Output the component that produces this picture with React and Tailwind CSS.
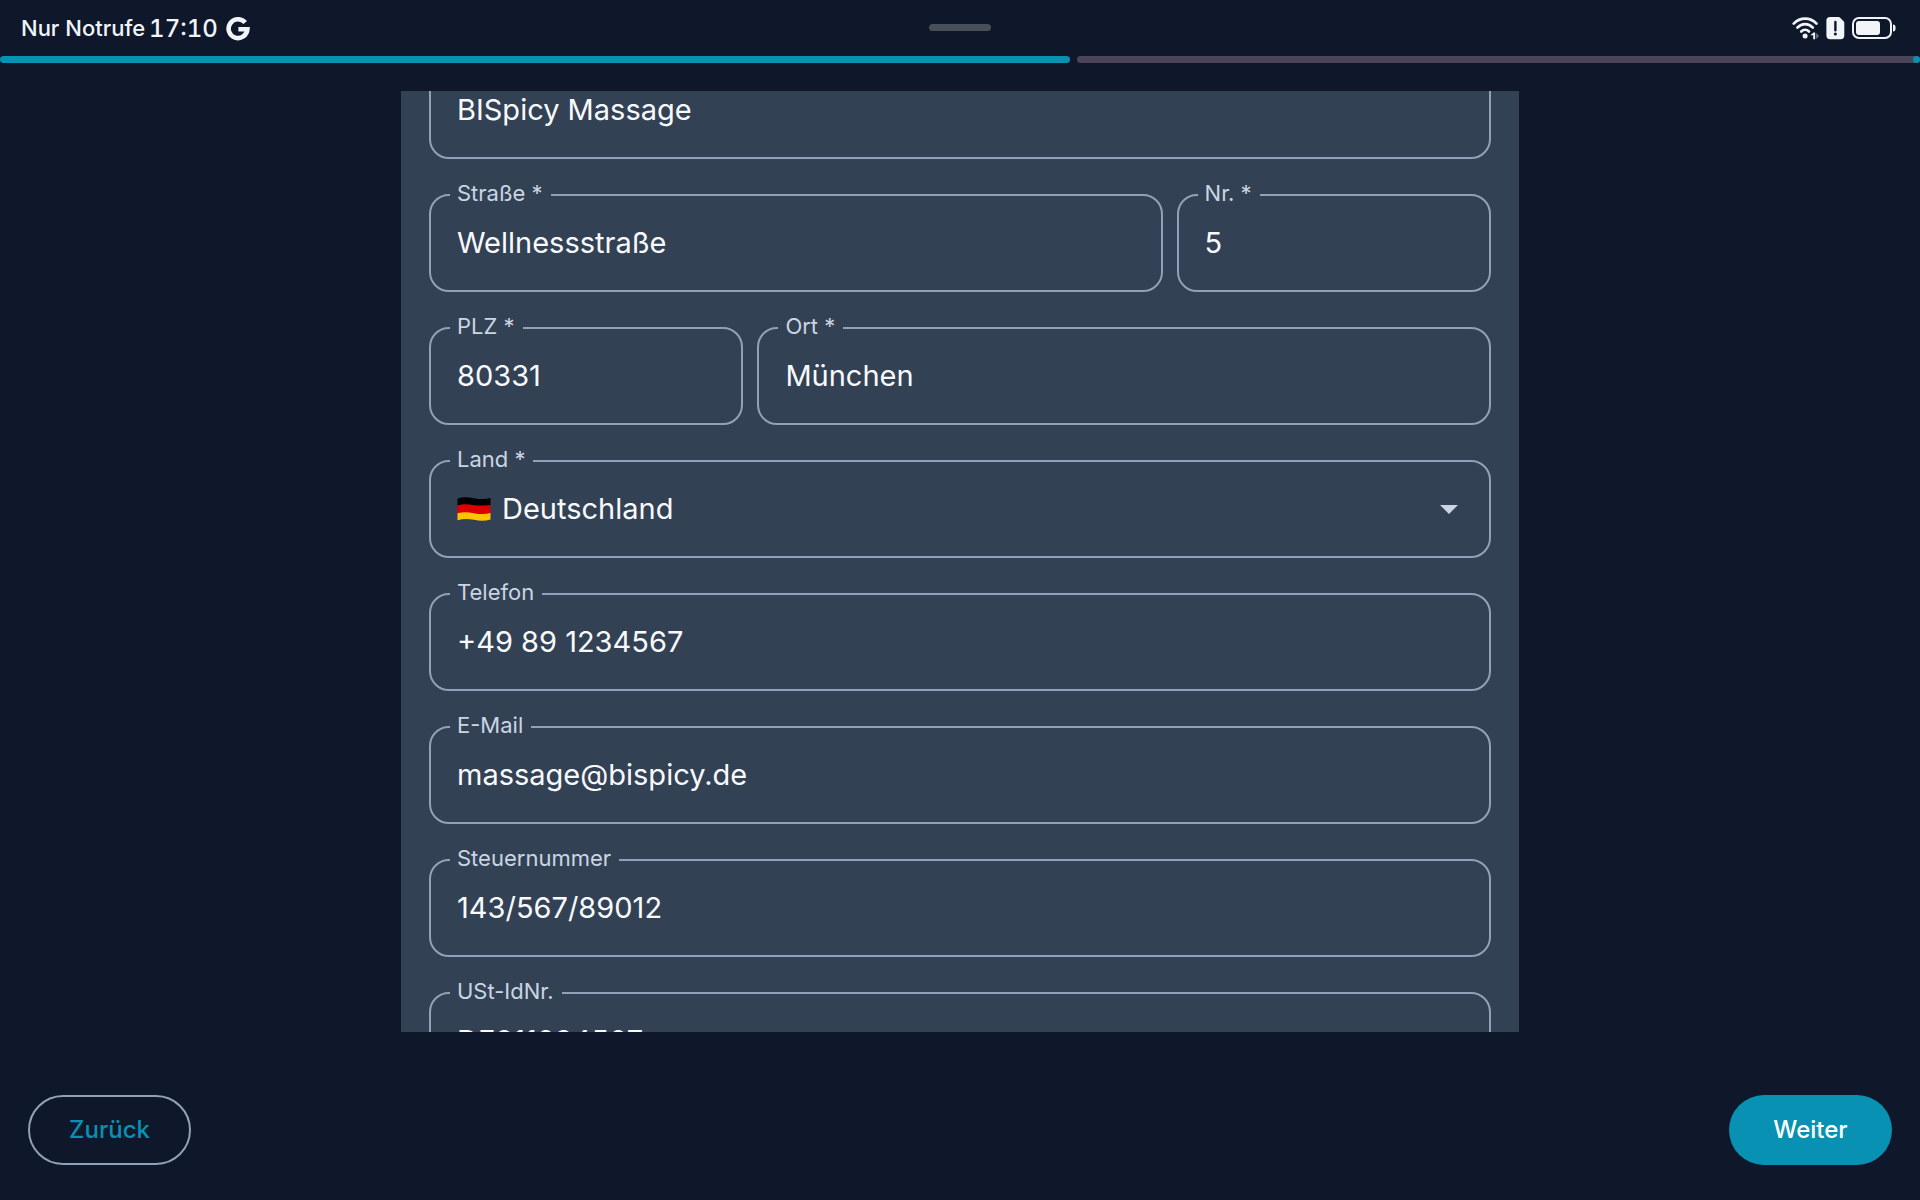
import React, { useState } from 'react';

const StatusBar = () => (
  <header className="relative flex h-14 items-center justify-between pl-[21px] pr-6 text-slate-100">
    <div className="flex items-center pt-px font-medium">
      <span className="text-[22px]">Nur Notrufe</span>
      <span className="ml-1 text-2xl tabular-nums">17:10</span>
      <svg className="ml-2 h-6 w-6" viewBox="0 0 24 24" fill="none" stroke="currentColor" strokeWidth="4.6">
        <path d="M19.2 5.6A9.4 9.4 0 1 0 21.4 12.2H12.4" />
      </svg>
    </div>

    {/* Drag handle */}
    <div className="absolute left-1/2 top-6 h-[7px] w-[62px] -translate-x-1/2 rounded-full bg-[#494f59]" />

    <div className="flex items-center gap-[7px]">
      <svg className="h-6 w-[27px]" viewBox="0 0 28 24" fill="none" stroke="currentColor" strokeLinecap="round" strokeWidth="2.8">
        <path d="M1.8 7.4C8.4.5 18.8.5 25.4 7.4" />
        <path d="M5.6 11.6c4.6-4.8 11.4-4.8 16 0" />
        <path d="M9.6 15.6c2.4-2.4 5.6-2.4 8 0" />
        <circle cx="13.6" cy="20.4" r="2.6" fill="currentColor" stroke="none" />
        <path d="M22.4 16.6h1.6v7h-2v-4h-3z" fill="currentColor" stroke="none" />
        <path d="M25 17v6.4l3-3.2z" fill="#64748b" stroke="none" />
      </svg>
      <svg className="h-6 w-[19px]" viewBox="0 0 19 24">
        <path d="M4 1h8.4c.8 0 1.4.3 2 .9l3 3c.6.6.9 1.2.9 2V19.6a3.6 3.6 0 0 1-3.6 3.6H4A3.6 3.6 0 0 1 .4 19.6V4.6A3.6 3.6 0 0 1 4 1z" fill="currentColor" />
        <path d="M9.4 6v8.2" stroke="#0f172a" strokeWidth="2.4" strokeLinecap="round" />
        <circle cx="9.4" cy="18" r="1.5" fill="#0f172a" />
      </svg>
      <svg className="h-6 w-11" viewBox="0 0 44 24">
        <rect x="1" y="2" width="38" height="20" rx="6" fill="none" stroke="currentColor" strokeWidth="2" />
        <rect x="4" y="5" width="24" height="14" rx="3" fill="currentColor" />
        <path d="M41 8.5c1.8 0 2.6 1 2.6 3.5s-.8 3.5-2.6 3.5z" fill="currentColor" />
      </svg>
    </div>
  </header>
);

const Progress = () => (
  <div className="flex h-[7px] gap-[7px]" role="progressbar" aria-valuenow={56} aria-label="Fortschritt">
    <div className="w-[1070px] max-w-[55.73%] rounded-full bg-[#0891b2]" />
    <div className="flex flex-1 justify-end rounded-full bg-[#4b455a]">
      <div className="w-[7px] rounded-full bg-[#0891b2]" />
    </div>
  </div>
);

// Outlined box with the label sitting on the top border
const Outline = ({ id, label, children }) => (
  <div className="relative flex h-[98px] min-w-0 items-center rounded-[20px] border-2 border-slate-400 px-[26px]">
    {label && (
      <label htmlFor={id} className="absolute -top-[17px] left-[19px] bg-[#334155] pl-[7px] pr-2 text-[22px] leading-7 text-slate-300">
        {label}
      </label>
    )}
    {children}
  </div>
);

const Field = ({ id, label, name, value, type = 'text' }) => {
  const [text, setText] = useState(value);
  return (
    <Outline id={id} label={label}>
      <input
        id={id}
        type={type}
        value={text}
        aria-label={name}
        onChange={(e) => setText(e.target.value)}
        className="h-full w-full min-w-0 bg-transparent pb-0.5 text-[29px] text-slate-50 outline-none"
      />
    </Outline>
  );
};

const GermanFlag = () => (
  <svg className="h-6 w-[34px] shrink-0" viewBox="0 0 34 24">
    <path d="M.5 1.5C6-.5 11 0 17 1.2s11 1.3 16.500-.2V8.500H.5z" fill="#000" />
    <path d="M.5 8.500C6 6.500 11 7 17 8.200s11 1.300 16.500-.2v8H.5z" fill="#dd0000" />
    <path d="M.5 16.200c5.500-1.500 10.500-1.200 16.500 0s11 1.300 16.500-.2v6.500c-5.500 1.500-10.500 1.500-16.500.3S6 21.700.5 23.300z" fill="#ffc400" />
  </svg>
);

const CountrySelect = () => (
  <Outline id="land" label="Land *">
    <GermanFlag />
    <select id="land" defaultValue="DE" className="ml-[11px] h-full flex-1 appearance-none bg-transparent text-[29px] text-slate-50 outline-none">
      <option value="DE">Deutschland</option>
    </select>
    <svg className="pointer-events-none mr-[5px] h-[9px] w-[18px]" viewBox="0 0 18 9">
      <path d="M0 0h18L9 9z" fill="#cbd5e1" />
    </svg>
  </Outline>
);

function App() {
  return (
    <div className="flex h-screen flex-col overflow-hidden bg-[#0f172a] font-['Inter',sans-serif]">
      <StatusBar />
      <Progress />

      <main className="mx-auto mt-7 min-h-0 w-full max-w-[1118px] flex-1 overflow-hidden bg-[#334155] px-7">
        <form className="-mt-[30px] flex flex-col gap-[35px]">
          <Field id="firma" name="Firma" value="BISpicy Massage" />
          <div className="grid grid-cols-[7fr_3fr] gap-3.5">
            <Field id="strasse" label="Straße *" value="Wellnessstraße" />
            <Field id="nr" label="Nr. *" value="5" />
          </div>
          <div className="grid grid-cols-[3fr_7fr] gap-3.5">
            <Field id="plz" label="PLZ *" value="80331" />
            <Field id="ort" label="Ort *" value="München" />
          </div>
          <CountrySelect />
          <Field id="telefon" label="Telefon" type="tel" value="+49 89 1234567" />
          <Field id="email" label="E-Mail" type="email" value="massage@bispicy.de" />
          <Field id="steuernummer" label="Steuernummer" value="143/567/89012" />
          <Field id="ustid" label="USt-IdNr." value="DE811234567" />
        </form>
      </main>

      <footer className="flex justify-between px-7 pb-[35px] pt-[63px] text-2xl font-medium">
        <button type="button" className="h-[70px] w-[163px] rounded-full border-2 border-slate-400 text-[#0891b2]">
          Zurück
        </button>
        <button type="button" className="h-[70px] w-[163px] rounded-full bg-[#0891b2] text-white">
          Weiter
        </button>
      </footer>
    </div>
  );
}

export default App;
